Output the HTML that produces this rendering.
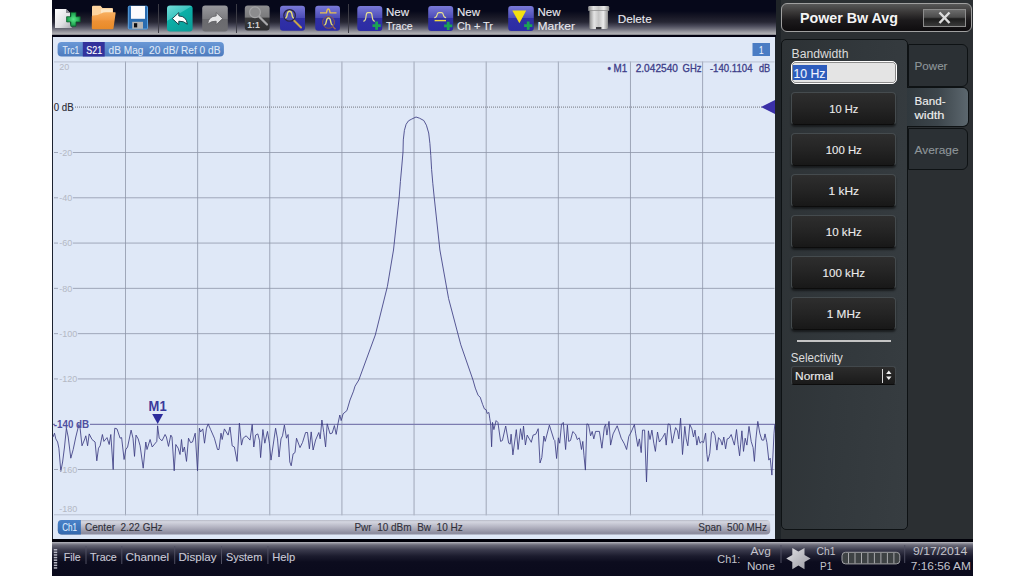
<!DOCTYPE html>
<html><head><meta charset="utf-8"><title>VNA</title>
<style>
html,body{margin:0;padding:0;background:#fff;}
body{width:1024px;height:576px;position:relative;overflow:hidden;font-family:"Liberation Sans",sans-serif;}
div{position:absolute;box-sizing:border-box;}
#app{left:52px;top:0;width:921px;height:576px;background:#1f2428;}
#toolbar{left:0;top:0;width:724px;height:37px;background:linear-gradient(#06081a 0px,#06081a 11px,#181826 17px,#262634 22px,#4a4a5a 26px,#6e6e7a 29px,#9a9aa2 32px,#aaaaae 33.5px,#a2a2a6 34.4px,#000010 35.2px,#000010 37px);}
#chart{left:0;top:37px;width:723px;height:502px;background:linear-gradient(90deg,#1c2230 0,#1c2230 1.4px,#dfe8f7 1.4px);}
#status{left:0;top:539px;width:921px;height:37px;background:linear-gradient(#000008 0,#000008 2.5px,#b8b8be 3.1px,#9a9aa4 4px,#6a6a78 6px,#3a3a4c 11px,#1c1c2e 17px,#0c0c1e 23px,#0a0a1c 37px);}
#rp{left:724px;top:0;width:197px;height:539px;background:linear-gradient(90deg,#1f2428 0,#1f2428 5px,#2b2f32 5px);}
.sep{width:1px;background:#5a5a68;}
#title{left:5px;top:3px;width:191px;height:29px;border:1px solid #a0a0a0;border-radius:6px;background:linear-gradient(#585858,#3a3838 30%,#1c1a1c 60%,#0e0c0e);}
#close{left:871px;top:9px;width:43px;height:18px;border:1px solid #8c8c8c;background:linear-gradient(#6c6c6c,#4c4c4c 45%,#1c1c1c 55%,#3a3a3a);}
#dlg{left:5px;top:39px;width:127px;height:491px;border:1px solid #0e1214;border-radius:5px;background:linear-gradient(95deg,#2d3235,#32383c 50%,#373d41);}
.btn{left:15px;width:105px;height:32.6px;border-radius:4px;background:linear-gradient(#2e2e2e,#242424 50%,#181818);border:1px solid #454b4e;border-bottom-color:#0c0c0c;box-shadow:0 2px 2px rgba(0,0,0,.5);}
.tab{left:132px;width:60px;border:1px solid #0e1214;border-radius:0 6px 6px 0;background:#2b3034;}
</style></head><body>
<div id="app">
 <div id="toolbar"></div>
 <div id="chart"></div>
 <div id="rp">
  <div id="title"></div>
  <div id="dlg"></div>
  <div class="tab" style="top:44px;height:43px"></div>
  <div class="tab" style="top:87px;height:40px;left:131px;width:62px;background:linear-gradient(90deg,#30383d,#3c454b 50%,#5c676e);border-left:none"></div>
  <div class="tab" style="top:128px;height:42px"></div>
  <div id="inp" style="left:14.5px;top:61.3px;width:106.5px;height:22.4px;border:1.5px solid #fff;border-radius:5px;background:#e4e4e4;box-shadow:inset 0 0 0 0.8px #707070"></div>
  <div style="left:17px;top:65px;width:34px;height:15px;background:#2c5cbc"></div>
  <div class="btn" style="top:92px"></div><div class="btn" style="top:133px"></div><div class="btn" style="top:174px"></div><div class="btn" style="top:215px"></div><div class="btn" style="top:256px"></div><div class="btn" style="top:297px"></div>
  <div style="left:20.5px;top:340px;width:94px;height:2px;background:#c4c4c4"></div>
  <div id="sel" style="left:15px;top:366px;width:105px;height:19px;border-radius:3px;background:linear-gradient(#2c2c2c,#1a1a1a);border:1px solid #42484c;border-bottom-color:#0c0c0c"></div>
  <div style="left:105.6px;top:368.5px;width:1px;height:14px;background:#d8d8d8"></div>
 </div>
 <div id="close"></div>
 <div id="status"></div>
</div>
<svg width="1024" height="576" viewBox="0 0 1024 576" style="position:absolute;left:0;top:0" font-family="Liberation Sans, sans-serif">
 <!-- trace label -->
 <rect x="57.6" y="42" width="166.3" height="14.5" rx="4" fill="url(#gLab)"/>
 <rect x="82.8" y="42" width="21.9" height="14.5" fill="#32329c"/>
 <rect x="752.5" y="43" width="17.5" height="13" fill="#4a7cc4"/>
 <!-- channel bar -->
 <rect x="57.8" y="520.1" width="712.4" height="14.5" rx="4" fill="url(#gBar)"/>
 <path d="M61.8 520.1 H80.9 V534.6 H61.8 Q57.8 534.6 57.8 530.6 V524.1 Q57.8 520.1 61.8 520.1 Z" fill="url(#gCh)"/>
 <g><line x1="125.5" y1="61.5" x2="125.5" y2="515.3" stroke="#8e96a8" stroke-width="0.8"/><line x1="197.64" y1="61.5" x2="197.64" y2="515.3" stroke="#8e96a8" stroke-width="0.8"/><line x1="269.78" y1="61.5" x2="269.78" y2="515.3" stroke="#8e96a8" stroke-width="0.8"/><line x1="341.92" y1="61.5" x2="341.92" y2="515.3" stroke="#8e96a8" stroke-width="0.8"/><line x1="414.06" y1="61.5" x2="414.06" y2="515.3" stroke="#8e96a8" stroke-width="0.8"/><line x1="486.2" y1="61.5" x2="486.2" y2="515.3" stroke="#8e96a8" stroke-width="0.8"/><line x1="558.34" y1="61.5" x2="558.34" y2="515.3" stroke="#8e96a8" stroke-width="0.8"/><line x1="630.48" y1="61.5" x2="630.48" y2="515.3" stroke="#8e96a8" stroke-width="0.8"/><line x1="702.62" y1="61.5" x2="702.62" y2="515.3" stroke="#8e96a8" stroke-width="0.8"/><line x1="54" y1="61.93" x2="774.5" y2="61.93" stroke="#b0b7c6" stroke-width="0.8"/><line x1="54" y1="152.5" x2="774.5" y2="152.5" stroke="#8e96a8" stroke-width="0.8"/><line x1="54" y1="197.79" x2="774.5" y2="197.79" stroke="#8e96a8" stroke-width="0.8"/><line x1="54" y1="243.07" x2="774.5" y2="243.07" stroke="#8e96a8" stroke-width="0.8"/><line x1="54" y1="288.36" x2="774.5" y2="288.36" stroke="#8e96a8" stroke-width="0.8"/><line x1="54" y1="333.65" x2="774.5" y2="333.65" stroke="#8e96a8" stroke-width="0.8"/><line x1="54" y1="378.93" x2="774.5" y2="378.93" stroke="#8e96a8" stroke-width="0.8"/><line x1="54" y1="469.5" x2="774.5" y2="469.5" stroke="#8e96a8" stroke-width="0.8"/><line x1="54" y1="514.79" x2="774.5" y2="514.79" stroke="#b0b7c6" stroke-width="0.8"/></g><rect x="58" y="149.5" width="14.799999999999999" height="6" fill="#dfe8f7"/><rect x="58" y="194.8" width="14.799999999999999" height="6" fill="#dfe8f7"/><rect x="58" y="240.1" width="14.799999999999999" height="6" fill="#dfe8f7"/><rect x="58" y="285.4" width="14.799999999999999" height="6" fill="#dfe8f7"/><rect x="58" y="330.6" width="19.8" height="6" fill="#dfe8f7"/><rect x="58" y="375.9" width="19.8" height="6" fill="#dfe8f7"/><rect x="58" y="466.5" width="19.8" height="6" fill="#dfe8f7"/>
 <line x1="75" y1="107.1" x2="775" y2="107.1" stroke="#72767e" stroke-width="1" stroke-dasharray="1,1"/>
 <line x1="90" y1="424.3" x2="775" y2="424.3" stroke="#7c7cb0" stroke-width="1.35"/><line x1="53" y1="424.3" x2="55" y2="424.3" stroke="#7c7cb0" stroke-width="1.35"/>
 <polyline points="53.0,437.0 54.5,433.2 55.8,438.9 57.6,442.0 58.9,448.2 60.8,471.4 62.6,462.0 64.5,447.0 66.4,428.2 68.2,437.0 70.8,458.2 73.2,449.5 75.8,437.0 78.9,424.5 80.1,428.2 82.0,445.8 84.8,438.9 85.8,435.8 87.6,445.8 89.2,433.9 92.0,439.5 95.1,442.0 96.8,460.8 98.5,448.2 100.1,445.8 102.4,434.5 103.9,441.4 107.0,437.6 109.2,444.5 110.8,434.5 113.2,469.5 114.1,437.0 114.8,428.2 117.0,428.9 120.1,438.2 121.6,437.6 124.1,459.5 125.8,449.5 127.6,447.0 131.1,430.1 133.0,438.2 134.5,456.4 136.0,435.1 138.2,438.9 140.1,445.8 143.2,468.2 145.8,442.0 147.0,449.5 150.1,439.5 152.2,447.0 156.8,441.4 157.6,425.8 159.2,438.2 162.0,440.8 165.1,434.5 166.4,437.0 168.5,446.4 170.8,435.1 172.0,437.0 174.2,470.8 175.8,444.5 178.2,448.2 180.0,454.5 181.5,439.5 182.8,452.0 184.4,447.0 186.5,461.4 188.5,438.2 190.6,442.6 192.5,442.0 195.2,433.2 197.5,470.8 199.4,428.2 200.6,432.0 202.8,428.9 204.5,443.2 206.5,428.2 208.2,423.9 210.6,429.5 214.4,438.2 217.5,449.5 219.0,449.5 221.0,433.2 222.2,439.5 224.4,428.9 228.1,435.1 230.0,427.0 232.2,445.8 234.4,447.0 237.1,461.4 239.4,423.2 241.5,445.1 243.1,438.2 246.2,435.8 250.0,440.1 252.2,424.5 253.8,447.0 255.6,435.1 257.8,433.9 259.6,440.8 260.6,457.6 262.9,429.5 264.8,443.2 267.5,431.4 269.4,443.2 271.0,460.1 275.6,428.2 277.5,438.9 279.0,457.0 281.0,438.9 282.5,435.8 284.4,425.1 286.5,438.2 288.1,434.5 289.8,462.0 291.2,465.8 293.1,453.9 295.0,452.6 296.5,438.2 300.0,447.6 302.5,442.5 305.6,432.5 307.5,432.5 309.4,448.8 311.2,431.9 313.1,450.0 315.6,440.0 318.8,432.5 320.2,438.8 321.9,420.0 323.8,432.5 325.6,446.9 327.2,423.8 330.0,433.8 332.2,433.1 334.4,425.6 336.2,434.4 338.1,423.1 339.8,415.0 341.2,420.6 343.1,413.8 346.9,410.6 350.0,400.0 353.5,391.2 355.0,386.2 358.8,380.0 375.3,335.0 387.4,286.4 393.5,250.0 399.2,197.2 400.4,181.6 401.8,166.0 403.0,152.0 403.3,139.9 404.4,130.4 406.1,124.3 408.5,120.8 411.7,119.1 416.0,117.0 419.5,118.2 423.8,120.5 426.4,125.2 428.7,133.0 429.9,143.4 430.8,155.6 431.6,169.4 432.8,183.3 434.2,197.2 439.9,250.0 448.6,298.6 460.8,344.8 473.0,380.0 475.3,388.1 478.1,395.3 480.2,397.2 482.6,404.4 484.4,408.9 486.2,409.8 487.1,413.4 488.9,412.5 489.8,418.8 490.7,424.2 491.6,446.8 492.5,422.4 493.9,429.6 496.1,420.6 497.9,422.4 500.6,441.4 502.4,440.5 505.7,426.0 508.7,443.2 510.2,444.1 511.1,434.2 512.9,454.9 516.3,429.6 518.1,449.5 520.5,428.7 522.3,439.6 523.5,426.0 525.4,445.0 527.2,435.1 531.3,442.3 533.1,435.1 535.8,434.2 538.2,428.7 540.0,463.0 541.8,457.6 543.9,436.0 545.2,441.4 549.4,425.1 553.9,439.6 554.8,440.5 556.6,458.5 558.4,437.8 559.7,443.2 561.5,424.2 563.3,422.4 565.6,449.5 567.4,425.1 568.7,441.4 570.5,440.5 572.8,431.5 575.5,434.2 577.3,439.6 579.2,437.8 580.0,440.8 581.5,449.5 582.8,441.4 584.0,455.8 585.4,470.1 586.9,423.9 588.5,424.5 590.6,435.8 592.2,431.4 593.8,438.9 595.6,431.4 599.4,431.4 601.9,448.2 604.4,427.0 605.6,424.5 606.9,435.1 609.0,421.4 610.6,445.1 613.1,433.9 617.2,425.8 621.2,438.2 624.4,443.9 626.6,449.5 628.8,436.4 631.2,432.0 634.4,424.5 635.6,433.2 637.8,446.4 639.4,438.9 641.2,452.6 642.5,430.1 644.6,430.1 646.5,482.0 648.4,430.8 650.0,439.5 651.9,430.1 653.8,443.2 655.4,451.4 657.5,432.0 659.4,442.0 662.5,437.6 665.0,433.2 666.2,445.1 668.1,423.9 670.0,424.5 672.2,443.2 675.6,427.6 677.5,430.8 678.8,438.9 680.6,418.2 682.5,454.5 684.8,426.4 686.2,438.9 687.8,445.8 689.8,424.5 691.9,428.9 693.5,437.0 695.0,430.1 696.9,445.1 698.5,436.4 700.0,443.2 701.9,441.4 703.5,442.6 705.6,433.2 706.9,454.5 707.8,461.4 709.8,453.2 711.5,432.6 713.1,431.4 715.0,435.1 716.9,450.1 718.5,437.6 720.6,440.1 722.2,445.1 723.8,437.0 725.6,448.9 727.2,438.9 729.0,438.2 731.2,434.5 732.8,440.1 734.4,445.1 736.5,429.5 738.1,444.5 739.6,455.8 741.9,430.8 743.5,451.4 745.2,438.2 746.9,445.1 749.0,426.4 751.2,441.4 753.1,447.6 754.4,461.4 755.9,438.9 757.8,421.4 759.8,433.2 761.9,440.1 763.8,440.1 765.0,433.9 766.9,442.6 768.8,460.1 770.2,458.2 771.9,475.1 773.1,452.0 774.0,433.2 774.8,424.5" fill="none" stroke="#3c3c82" stroke-width="0.85" stroke-linejoin="round"/>
 <path d="M152.2 413.9 L163.1 413.9 L157.7 424 Z" fill="#2c2c9c"/>
 <path d="M775 100 L775 114 L761 107 Z" fill="#3a30a8"/>
 
<defs>
 <linearGradient id="gBlue" x1="0" y1="0" x2="0" y2="1">
  <stop offset="0" stop-color="#7a7ad8"/><stop offset="0.48" stop-color="#4c4cb8"/><stop offset="0.5" stop-color="#3030a6"/><stop offset="1" stop-color="#2c2ca4"/>
 </linearGradient>
 <linearGradient id="gGray" x1="0" y1="0" x2="0" y2="1">
  <stop offset="0" stop-color="#98989c"/><stop offset="0.5" stop-color="#7c7c80"/><stop offset="0.52" stop-color="#6a6a6e"/><stop offset="1" stop-color="#6e6e72"/>
 </linearGradient>
 <linearGradient id="gGray2" x1="0" y1="0" x2="0" y2="1">
  <stop offset="0" stop-color="#8e8e90"/><stop offset="0.46" stop-color="#7a7a7c"/><stop offset="0.5" stop-color="#3a3a3c"/><stop offset="1" stop-color="#2e2e30"/>
 </linearGradient>
 <linearGradient id="gTeal" gradientUnits="userSpaceOnUse" x1="167" y1="5.6" x2="185.2" y2="35.85">
  <stop offset="0" stop-color="#74dcd8"/><stop offset="0.36" stop-color="#40c6c2"/><stop offset="0.385" stop-color="#0cb0a8"/><stop offset="1" stop-color="#0a9a96"/>
 </linearGradient>
 <linearGradient id="gPage" x1="0" y1="0" x2="1" y2="1">
  <stop offset="0" stop-color="#ffffff"/><stop offset="0.6" stop-color="#e0e0e4"/><stop offset="1" stop-color="#a8a8b0"/>
 </linearGradient>
 <linearGradient id="gFold" x1="0" y1="0" x2="0" y2="1">
  <stop offset="0" stop-color="#f8b060"/><stop offset="0.45" stop-color="#f29a42"/><stop offset="0.5" stop-color="#ee9236"/><stop offset="1" stop-color="#e88a28"/>
 </linearGradient>
 <linearGradient id="gCan" x1="0" y1="0" x2="1" y2="0">
  <stop offset="0" stop-color="#8c8c8c"/><stop offset="0.25" stop-color="#e4e4e4"/><stop offset="0.5" stop-color="#c4c4c4"/><stop offset="0.75" stop-color="#ececec"/><stop offset="1" stop-color="#8c8c8c"/>
 </linearGradient>
 <linearGradient id="gLab" x1="0" y1="0" x2="0" y2="1"><stop offset="0" stop-color="#6a98d6"/><stop offset="1" stop-color="#4c7abe"/></linearGradient>
 <linearGradient id="gBar" x1="0" y1="0" x2="0" y2="1"><stop offset="0" stop-color="#b8bac6"/><stop offset="0.12" stop-color="#d4d6e0"/><stop offset="0.5" stop-color="#b2b2c0"/><stop offset="0.85" stop-color="#9090a2"/><stop offset="1" stop-color="#8a8a9c"/></linearGradient>
 <linearGradient id="gCh" x1="0" y1="0" x2="0" y2="1"><stop offset="0" stop-color="#4a82c8"/><stop offset="1" stop-color="#3468ac"/></linearGradient>
 <radialGradient id="gPlus"><stop offset="0" stop-color="#58e888"/><stop offset="1" stop-color="#169848"/></radialGradient>
 <linearGradient id="gStar" x1="0" y1="0" x2="1" y2="1"><stop offset="0" stop-color="#e0e0e4"/><stop offset="1" stop-color="#9a9aa2"/></linearGradient>
</defs>
<!-- new doc -->
<path d="M55 9 H66 L70 13 V24 L72 28 H55 Z" fill="url(#gPage)"/>
<path d="M66 9 L70 13 H66 Z" fill="#8a8a92"/>
<path d="M70.8 12.4 h5.2 v4.3 h4.2 v5.2 h-4.2 v4.3 h-5.2 v-4.3 h-4.2 v-5.2 h4.2 Z" fill="url(#gPlus)" stroke="#0c5c2c" stroke-width="0.8" stroke-linejoin="round"/>
<!-- folder -->
<path d="M92 7 Q92 5.8 93.2 5.8 H100.5 L102.5 8 H112 Q113 8 113 9 V28 H92 Z" fill="#fdd4a0"/>
<path d="M101 9.2 H112 V16 H101 Z" fill="#fde6c4"/>
<path d="M93 15.5 Q98 15.5 101 13.5 Q103 12.3 106 12.3 H115 Q115.8 12.3 115.6 13.2 L113.5 28.2 Q113.3 29.3 112 29.3 H93 Q91.8 29.3 91.8 28 V16.5 Q91.8 15.5 93 15.5 Z" fill="url(#gFold)"/>
<!-- floppy -->
<rect x="128.3" y="6.2" width="19.2" height="22.8" rx="1" fill="#2a6cb0" stroke="#5aa4e4" stroke-width="1"/>
<rect x="131" y="6" width="14" height="12.8" fill="#fbfbfd"/>
<rect x="132.2" y="21.8" width="10.8" height="7" fill="#b4b4b4"/>
<rect x="134" y="23.2" width="3.2" height="4.2" fill="#0c0c10"/>
<!-- separators -->
<rect x="158" y="4" width="1" height="29" fill="#3c3c46"/>
<rect x="236" y="4" width="1" height="29" fill="#3c3c46"/>
<rect x="348" y="4" width="1" height="29" fill="#3c3c46"/>
<!-- undo -->
<rect x="167" y="5.6" width="25.6" height="25.8" rx="3" fill="url(#gTeal)"/>
<path d="M172.3 18.6 L178.8 12.6 V16 Q186.5 16 187.3 24.2 Q184 20.8 178.8 21.2 V24.6 Z" fill="#ffffff" stroke="#0c3840" stroke-width="0.9" stroke-linejoin="round"/>
<!-- redo -->
<rect x="202.2" y="5.6" width="25.6" height="25.8" rx="3" fill="url(#gGray)"/>
<path d="M222.7 18.6 L216.2 12.6 V16 Q208.5 16 207.7 24.2 Q211 20.8 216.2 21.2 V24.6 Z" fill="#e4e4e6" stroke="#5a5a5e" stroke-width="0.8" stroke-linejoin="round"/>
<!-- zoom 1:1 -->
<rect x="244.8" y="5.6" width="24.8" height="25" rx="3" fill="url(#gGray2)"/>
<line x1="259.5" y1="17" x2="267" y2="24.5" stroke="#a8a8aa" stroke-width="2.2" stroke-linecap="round"/>
<circle cx="255" cy="12.3" r="5.4" fill="#8c8c8e" stroke="#a4a4a6" stroke-width="1.2"/>
<text x="247.2" y="28.2" font-size="9.5" font-weight="bold" fill="#d4d4d4" textLength="12.5" lengthAdjust="spacingAndGlyphs">1:1</text>
<!-- zoom 2 -->
<rect x="280" y="5.8" width="25" height="25" rx="3" fill="url(#gBlue)"/>
<line x1="293.5" y1="20" x2="301" y2="27.5" stroke="#c8a448" stroke-width="2" stroke-linecap="round"/>
<circle cx="289.6" cy="15.4" r="5.8" fill="#5050b4" stroke="#2a2444" stroke-width="1.2"/>
<path d="M285.3 18 Q286.8 18 287.3 14 Q287.8 11.2 289.6 11.2 Q291.4 11.2 291.9 14 Q292.4 18 293.9 18" fill="none" stroke="#e8e070" stroke-width="1.4"/>
<!-- zoom 3 -->
<rect x="315.2" y="5.8" width="24.8" height="25" rx="3" fill="url(#gBlue)"/>
<path d="M320 12.8 H326.5 Q327 9 328.3 9 Q329.6 9 330.1 12.8 H336.5" fill="none" stroke="#e8c050" stroke-width="1.3"/>
<circle cx="328.5" cy="22.3" r="6" fill="#3a38a8" stroke="#8a5a48" stroke-width="1"/>
<path d="M324.3 25 Q325.8 25 326.4 21 Q326.9 18 328.5 18 Q330.1 18 330.6 21 Q331.2 25 332.7 25" fill="none" stroke="#e8e070" stroke-width="1.4"/>
<line x1="332.8" y1="26.6" x2="335.5" y2="29.3" stroke="#a06a50" stroke-width="1.4"/>
<!-- new trace -->
<rect x="357.3" y="5.9" width="25" height="25.1" rx="3" fill="url(#gBlue)"/>
<path d="M363.3 21.2 Q365.6 21.2 366 16.5 Q366.3 12.6 367.8 12.6 H370.4 Q371.9 12.6 372.2 16.5 Q372.6 21.2 374.9 21.2" fill="none" stroke="#e8e090" stroke-width="1.2"/>
<path d="M375.2 21.5 h2.8 v2.7 h2.7 v2.8 h-2.7 v2.7 h-2.8 v-2.7 h-2.7 v-2.8 h2.7 Z" fill="#1ca454"/>
<!-- new ch+tr -->
<rect x="428.2" y="5.9" width="25" height="25.1" rx="3" fill="url(#gBlue)"/>
<path d="M434.3 17.6 Q436.6 17.6 437 15 Q437.4 12.6 438.8 12.6 H441.6 Q443 12.6 443.4 15 Q443.8 17.6 446.1 17.6" fill="none" stroke="#e8e090" stroke-width="1.2"/>
<line x1="434.6" y1="20.6" x2="446" y2="20.6" stroke="#f0d840" stroke-width="1.4"/>
<path d="M446.8 21.8 h2.8 v2.7 h2.7 v2.8 h-2.7 v2.7 h-2.8 v-2.7 h-2.7 v-2.8 h2.7 Z" fill="#1ca454"/>
<!-- new marker -->
<rect x="508.2" y="5.9" width="25.6" height="25.1" rx="3" fill="url(#gBlue)"/>
<path d="M512.3 10.6 H526.2 L519.4 23.2 Z" fill="#f4e010"/>
<path d="M526.8 21.5 h2.8 v2.7 h2.7 v2.8 h-2.7 v2.7 h-2.8 v-2.7 h-2.7 v-2.8 h2.7 Z" fill="#1ca454"/>
<!-- trash -->
<rect x="589.4" y="9.5" width="18.6" height="19.6" rx="1.5" fill="url(#gCan)"/>
<rect x="588.2" y="6" width="21" height="4.4" rx="1.2" fill="url(#gCan)"/>
<rect x="588.2" y="10" width="21" height="0.8" fill="#909090"/>
<rect x="596" y="27" width="5.4" height="2.2" fill="#38383c"/>
<!-- status: grip -->
<g fill="#b8b8c4"><rect x="53.8" y="549.0" width="3.4" height="1.5"/><rect x="53.8" y="551.6" width="3.4" height="1.5"/><rect x="53.8" y="554.2" width="3.4" height="1.5"/><rect x="53.8" y="556.8" width="3.4" height="1.5"/><rect x="53.8" y="559.4" width="3.4" height="1.5"/><rect x="53.8" y="562.0" width="3.4" height="1.5"/><rect x="53.8" y="564.6" width="3.4" height="1.5"/><rect x="53.8" y="567.2" width="3.4" height="1.5"/></g>
<!-- status separators -->
<g fill="#4e4e60">
<rect x="85.5" y="546" width="1" height="18"/><rect x="121.3" y="546" width="1" height="18"/><rect x="174.2" y="546" width="1" height="18"/><rect x="221" y="546" width="1" height="18"/><rect x="267.4" y="546" width="1" height="18"/>
<rect x="780.5" y="545" width="1" height="18"/><rect x="904.2" y="545" width="1" height="18"/>
</g>
<!-- star -->
<path d="M810.6 558.6 L804.5 562.1 L804.5 569.2 L798.4 565.6 L792.3 569.2 L792.3 562.1 L786.2 558.6 L792.3 555.1 L792.3 548.0 L798.4 551.6 L804.5 548.0 L804.5 555.1 Z" fill="url(#gStar)"/>
<!-- progress -->
<rect x="842" y="552.3" width="57.8" height="11.6" rx="3.5" fill="#3e4244" stroke="#a0a0a4" stroke-width="1"/>
<g stroke="#b4b4b8" stroke-width="0.9"><line x1="848.5" y1="553" x2="848.5" y2="563.4"/><line x1="855.0" y1="553" x2="855.0" y2="563.4"/><line x1="861.5" y1="553" x2="861.5" y2="563.4"/><line x1="867.9" y1="553" x2="867.9" y2="563.4"/><line x1="874.4" y1="553" x2="874.4" y2="563.4"/><line x1="880.9" y1="553" x2="880.9" y2="563.4"/><line x1="887.4" y1="553" x2="887.4" y2="563.4"/><line x1="893.9" y1="553" x2="893.9" y2="563.4"/></g>
<!-- close X -->
<path d="M939.5 12.5 L949.5 23 M949.5 12.5 L939.5 23" stroke="#dcdcdc" stroke-width="2.5" fill="none"/>
<!-- spinner -->
<path d="M886.1 374 L888.8 370.6 L891.5 374 Z M886.1 376.6 L888.8 380 L891.5 376.6 Z" fill="#f0f0f0"/>

 <text xml:space="preserve" x="386" y="15.5" font-size="11.5" fill="#e8e8ee" font-weight="normal" text-anchor="start" textLength="23" lengthAdjust="spacingAndGlyphs" stroke="#e8e8ee" stroke-width="0.12">New</text><text xml:space="preserve" x="386" y="30" font-size="11.5" fill="#e8e8ee" font-weight="normal" text-anchor="start" textLength="26.5" lengthAdjust="spacingAndGlyphs" stroke="#e8e8ee" stroke-width="0.12">Trace</text><text xml:space="preserve" x="457" y="15.5" font-size="11.5" fill="#e8e8ee" font-weight="normal" text-anchor="start" textLength="23" lengthAdjust="spacingAndGlyphs" stroke="#e8e8ee" stroke-width="0.12">New</text><text xml:space="preserve" x="457" y="30" font-size="11.5" fill="#e8e8ee" font-weight="normal" text-anchor="start" textLength="36" lengthAdjust="spacingAndGlyphs" stroke="#e8e8ee" stroke-width="0.12">Ch + Tr</text><text xml:space="preserve" x="537.5" y="15.5" font-size="11.5" fill="#e8e8ee" font-weight="normal" text-anchor="start" textLength="23" lengthAdjust="spacingAndGlyphs" stroke="#e8e8ee" stroke-width="0.12">New</text><text xml:space="preserve" x="537.5" y="30" font-size="11.5" fill="#e8e8ee" font-weight="normal" text-anchor="start" textLength="37.5" lengthAdjust="spacingAndGlyphs" stroke="#e8e8ee" stroke-width="0.12">Marker</text><text xml:space="preserve" x="617.7" y="23" font-size="11.5" fill="#e8e8ee" font-weight="normal" text-anchor="start" textLength="34" lengthAdjust="spacingAndGlyphs" stroke="#e8e8ee" stroke-width="0.12">Delete</text><text xml:space="preserve" x="63.7" y="561.2" font-size="11.5" fill="#c9c9d6" font-weight="normal" text-anchor="start" textLength="17" lengthAdjust="spacingAndGlyphs" stroke="#c9c9d6" stroke-width="0.12">File</text><text xml:space="preserve" x="90" y="561.2" font-size="11.5" fill="#c9c9d6" font-weight="normal" text-anchor="start" textLength="26.8" lengthAdjust="spacingAndGlyphs" stroke="#c9c9d6" stroke-width="0.12">Trace</text><text xml:space="preserve" x="125.5" y="561.2" font-size="11.5" fill="#c9c9d6" font-weight="normal" text-anchor="start" textLength="43.7" lengthAdjust="spacingAndGlyphs" stroke="#c9c9d6" stroke-width="0.12">Channel</text><text xml:space="preserve" x="178.5" y="561.2" font-size="11.5" fill="#c9c9d6" font-weight="normal" text-anchor="start" textLength="38" lengthAdjust="spacingAndGlyphs" stroke="#c9c9d6" stroke-width="0.12">Display</text><text xml:space="preserve" x="225.9" y="561.2" font-size="11.5" fill="#c9c9d6" font-weight="normal" text-anchor="start" textLength="36.4" lengthAdjust="spacingAndGlyphs" stroke="#c9c9d6" stroke-width="0.12">System</text><text xml:space="preserve" x="272.2" y="561.2" font-size="11.5" fill="#c9c9d6" font-weight="normal" text-anchor="start" textLength="23" lengthAdjust="spacingAndGlyphs" stroke="#c9c9d6" stroke-width="0.12">Help</text><text xml:space="preserve" x="717.3" y="562.8" font-size="11.5" fill="#c4c4cc" font-weight="normal" text-anchor="start" textLength="23" lengthAdjust="spacingAndGlyphs" >Ch1:</text><text xml:space="preserve" x="750.6" y="555.3" font-size="11" fill="#c4c4cc" font-weight="normal" text-anchor="start" textLength="20.3" lengthAdjust="spacingAndGlyphs" >Avg</text><text xml:space="preserve" x="746.9" y="569.8" font-size="11" fill="#c4c4cc" font-weight="normal" text-anchor="start" textLength="28" lengthAdjust="spacingAndGlyphs" >None</text><text xml:space="preserve" x="816.6" y="555.3" font-size="11" fill="#c4c4cc" font-weight="normal" text-anchor="start" textLength="18.8" lengthAdjust="spacingAndGlyphs" >Ch1</text><text xml:space="preserve" x="820" y="569.8" font-size="11" fill="#c4c4cc" font-weight="normal" text-anchor="start" textLength="12.2" lengthAdjust="spacingAndGlyphs" >P1</text><text xml:space="preserve" x="913" y="555.3" font-size="11" fill="#c4c4cc" font-weight="normal" text-anchor="start" textLength="54.4" lengthAdjust="spacingAndGlyphs" >9/17/2014</text><text xml:space="preserve" x="910.8" y="569.8" font-size="11" fill="#c4c4cc" font-weight="normal" text-anchor="start" textLength="60" lengthAdjust="spacingAndGlyphs" >7:16:56 AM</text><text xml:space="preserve" x="62.4" y="53.8" font-size="10.4" fill="#dfe8f7" font-weight="normal" text-anchor="start" textLength="16.8" lengthAdjust="spacingAndGlyphs" stroke="#dfe8f7" stroke-width="0.12">Trc1</text><text xml:space="preserve" x="86.3" y="53.8" font-size="10.4" fill="#ffffff" font-weight="normal" text-anchor="start" textLength="15.8" lengthAdjust="spacingAndGlyphs" stroke="#ffffff" stroke-width="0.12">S21</text><text xml:space="preserve" x="108.6" y="53.8" font-size="10.4" fill="#dfe8f7" font-weight="normal" text-anchor="start" textLength="111.8" lengthAdjust="spacingAndGlyphs" stroke="#dfe8f7" stroke-width="0.12">dB Mag  20 dB/ Ref 0 dB</text><text xml:space="preserve" x="759" y="54" font-size="10.5" fill="#e8f0ff" font-weight="normal" text-anchor="start" textLength="4.5" lengthAdjust="spacingAndGlyphs" stroke="#e8f0ff" stroke-width="0.12">1</text><text xml:space="preserve" x="59.3" y="69.7" font-size="9" fill="#b4b8c4" font-weight="normal" text-anchor="start">20</text><text xml:space="preserve" x="59.3" y="155.7" font-size="9" fill="#b4b8c4" font-weight="normal" text-anchor="start">-20</text><text xml:space="preserve" x="59.3" y="201.0" font-size="9" fill="#b4b8c4" font-weight="normal" text-anchor="start">-40</text><text xml:space="preserve" x="59.3" y="246.3" font-size="9" fill="#b4b8c4" font-weight="normal" text-anchor="start">-60</text><text xml:space="preserve" x="59.3" y="291.6" font-size="9" fill="#b4b8c4" font-weight="normal" text-anchor="start">-80</text><text xml:space="preserve" x="59.3" y="336.8" font-size="9" fill="#b4b8c4" font-weight="normal" text-anchor="start">-100</text><text xml:space="preserve" x="59.3" y="382.1" font-size="9" fill="#b4b8c4" font-weight="normal" text-anchor="start">-120</text><text xml:space="preserve" x="59.3" y="472.7" font-size="9" fill="#b4b8c4" font-weight="normal" text-anchor="start">-160</text><text xml:space="preserve" x="59.3" y="512.0" font-size="9" fill="#b4b8c4" font-weight="normal" text-anchor="start">-180</text><text xml:space="preserve" x="53.7" y="110.7" font-size="10.5" fill="#2a2a34" font-weight="normal" text-anchor="start" textLength="20" lengthAdjust="spacingAndGlyphs" stroke="#2a2a34" stroke-width="0.12">0 dB</text><text xml:space="preserve" x="53.7" y="427.9" font-size="11" fill="#5050a0" font-weight="bold" text-anchor="start" textLength="35.5" lengthAdjust="spacingAndGlyphs">-140 dB</text><text xml:space="preserve" x="148.6" y="410.8" font-size="15.4" fill="#3a3a9c" font-weight="bold" text-anchor="start" textLength="18" lengthAdjust="spacingAndGlyphs">M1</text><text xml:space="preserve" x="607.4" y="72.3" font-size="10.3" fill="#3c3c88" font-weight="normal" text-anchor="start" textLength="19.8" lengthAdjust="spacingAndGlyphs" stroke="#3c3c88" stroke-width="0.3">• M1</text><text xml:space="preserve" x="635.7" y="72.3" font-size="10.3" fill="#3c3c88" font-weight="normal" text-anchor="start" textLength="42.2" lengthAdjust="spacingAndGlyphs" stroke="#3c3c88" stroke-width="0.3">2.042540</text><text xml:space="preserve" x="682.6" y="72.3" font-size="10.3" fill="#3c3c88" font-weight="normal" text-anchor="start" textLength="19" lengthAdjust="spacingAndGlyphs" stroke="#3c3c88" stroke-width="0.3">GHz</text><text xml:space="preserve" x="709.9" y="72.3" font-size="10.3" fill="#3c3c88" font-weight="normal" text-anchor="start" textLength="42.7" lengthAdjust="spacingAndGlyphs" stroke="#3c3c88" stroke-width="0.3">-140.1104</text><text xml:space="preserve" x="759" y="72.3" font-size="10.3" fill="#3c3c88" font-weight="normal" text-anchor="start" textLength="11.2" lengthAdjust="spacingAndGlyphs" stroke="#3c3c88" stroke-width="0.3">dB</text><text xml:space="preserve" x="62.2" y="531" font-size="10.4" fill="#dceaff" font-weight="normal" text-anchor="start" textLength="14.8" lengthAdjust="spacingAndGlyphs" stroke="#dceaff" stroke-width="0.12">Ch1</text><text xml:space="preserve" x="85.1" y="531" font-size="10.4" fill="#30303a" font-weight="normal" text-anchor="start" textLength="77.5" lengthAdjust="spacingAndGlyphs" stroke="#30303a" stroke-width="0.12">Center  2.22 GHz</text><text xml:space="preserve" x="354.4" y="531" font-size="10.4" fill="#30303a" font-weight="normal" text-anchor="start" textLength="108.3" lengthAdjust="spacingAndGlyphs" stroke="#30303a" stroke-width="0.12">Pwr  10 dBm  Bw  10 Hz</text><text xml:space="preserve" x="698.3" y="531" font-size="10.4" fill="#30303a" font-weight="normal" text-anchor="start" textLength="68.7" lengthAdjust="spacingAndGlyphs" stroke="#30303a" stroke-width="0.12">Span  500 MHz</text><text xml:space="preserve" x="800" y="22.5" font-size="14" fill="#f4f4f4" font-weight="bold" text-anchor="start" textLength="98" lengthAdjust="spacingAndGlyphs">Power Bw Avg</text><text xml:space="preserve" x="791.5" y="58.2" font-size="12" fill="#dcdcdc" font-weight="normal" text-anchor="start" textLength="57" lengthAdjust="spacingAndGlyphs" >Bandwidth</text><text xml:space="preserve" x="793.5" y="77.5" font-size="13" fill="#f0f4ff" font-weight="normal" text-anchor="start" textLength="32" lengthAdjust="spacingAndGlyphs" stroke="#f0f4ff" stroke-width="0.12">10 Hz</text><text xml:space="preserve" x="843.8" y="113.3" font-size="11.5" fill="#ececec" font-weight="normal" text-anchor="middle" textLength="29" lengthAdjust="spacingAndGlyphs" stroke="#ececec" stroke-width="0.12">10 Hz</text><text xml:space="preserve" x="843.8" y="154.3" font-size="11.5" fill="#ececec" font-weight="normal" text-anchor="middle" textLength="36" lengthAdjust="spacingAndGlyphs" stroke="#ececec" stroke-width="0.12">100 Hz</text><text xml:space="preserve" x="843.8" y="195.3" font-size="11.5" fill="#ececec" font-weight="normal" text-anchor="middle" textLength="30.5" lengthAdjust="spacingAndGlyphs" stroke="#ececec" stroke-width="0.12">1 kHz</text><text xml:space="preserve" x="843.8" y="236.3" font-size="11.5" fill="#ececec" font-weight="normal" text-anchor="middle" textLength="36" lengthAdjust="spacingAndGlyphs" stroke="#ececec" stroke-width="0.12">10 kHz</text><text xml:space="preserve" x="843.8" y="277.3" font-size="11.5" fill="#ececec" font-weight="normal" text-anchor="middle" textLength="42.5" lengthAdjust="spacingAndGlyphs" stroke="#ececec" stroke-width="0.12">100 kHz</text><text xml:space="preserve" x="843.8" y="318.3" font-size="11.5" fill="#ececec" font-weight="normal" text-anchor="middle" textLength="34" lengthAdjust="spacingAndGlyphs" stroke="#ececec" stroke-width="0.12">1 MHz</text><text xml:space="preserve" x="790.8" y="361.6" font-size="12" fill="#dcdcdc" font-weight="normal" text-anchor="start" textLength="52" lengthAdjust="spacingAndGlyphs" >Selectivity</text><text xml:space="preserve" x="795" y="380" font-size="11.5" fill="#ececec" font-weight="normal" text-anchor="start" textLength="38.5" lengthAdjust="spacingAndGlyphs" stroke="#ececec" stroke-width="0.12">Normal</text><text xml:space="preserve" x="914.5" y="69.5" font-size="11.5" fill="#8e969a" font-weight="normal" text-anchor="start" textLength="33" lengthAdjust="spacingAndGlyphs" stroke="#8e969a" stroke-width="0.12">Power</text><text xml:space="preserve" x="914.5" y="104.5" font-size="11.5" fill="#eeeeee" font-weight="normal" text-anchor="start" textLength="31" lengthAdjust="spacingAndGlyphs" stroke="#eeeeee" stroke-width="0.12">Band-</text><text xml:space="preserve" x="914.5" y="118.5" font-size="11.5" fill="#eeeeee" font-weight="normal" text-anchor="start" textLength="30" lengthAdjust="spacingAndGlyphs" stroke="#eeeeee" stroke-width="0.12">width</text><text xml:space="preserve" x="914.5" y="154" font-size="11.5" fill="#8e969a" font-weight="normal" text-anchor="start" textLength="44" lengthAdjust="spacingAndGlyphs" stroke="#8e969a" stroke-width="0.12">Average</text>
</svg>
</body></html>
